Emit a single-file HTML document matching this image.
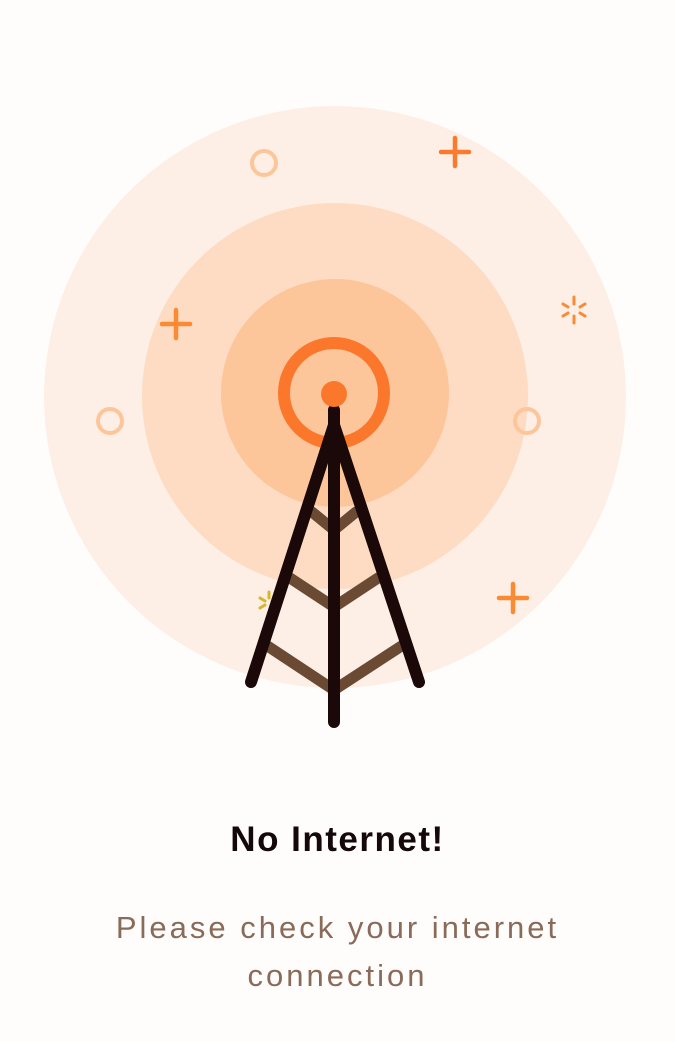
<!DOCTYPE html>
<html><head><style>
html,body{margin:0;padding:0;background:#fffdfc;width:675px;height:1042px;overflow:hidden}
h1{position:absolute;top:820px;left:0;width:675px;text-align:center;margin:0;font:bold 35px "Liberation Sans",sans-serif;color:#140808;letter-spacing:1.5px}
p{position:absolute;top:904px;left:0;width:675px;text-align:center;margin:0;font:31px/48px "Liberation Sans",sans-serif;color:#8a6a58;letter-spacing:3px}
</style></head><body>
<svg width="675" height="760" style="position:absolute;left:0;top:0">
<circle cx="335" cy="397" r="291" fill="#fdefe5"/>
<circle cx="335" cy="396" r="193" fill="#fddcc3"/>
<circle cx="335" cy="393" r="114" fill="#fdc59a"/>
<g stroke-linecap="round" fill="none">
<circle cx="264" cy="163" r="12" stroke="#fdc59a" stroke-width="4"/>
<circle cx="110" cy="421" r="12" stroke="#fdc59a" stroke-width="4"/>
<circle cx="527" cy="421" r="12" stroke="#fdc59a" stroke-width="4"/>
<path d="M455 138v28M441 152h28" stroke="#fb7a2e" stroke-width="4.5"/>
<path d="M176 310v28M162 324h28" stroke="#fb8a35" stroke-width="4.5"/>
<path d="M513 584v28M499 598h28" stroke="#fb8a35" stroke-width="4.5"/>
<path d="M574 297v7M574 316v7M563 304l5 3M580 313l5 3M563 316l5-3M580 307l5-3" stroke="#fb8a35" stroke-width="3"/>
<path d="M269 592v6M260 598l5 3M260 608l5-3" stroke="#d9b52a" stroke-width="3"/>
<circle cx="334" cy="393" r="50" stroke="#fb772c" stroke-width="12"/>
<path d="M312 512L334 530L356 512M290 578L334 607L378 578M266 645L334 690L403 645" stroke="#6b4a33" stroke-width="11"/>
<path d="M334 410V722M334 425L251 682M334 425L419 682" stroke="#1b0909" stroke-width="12" stroke-linejoin="round"/>
</g>
<circle cx="334" cy="394" r="13" fill="#fb772c"/>
</svg>
<h1>No Internet!</h1>
<p>Please check your internet<br>connection</p>
</body></html>
